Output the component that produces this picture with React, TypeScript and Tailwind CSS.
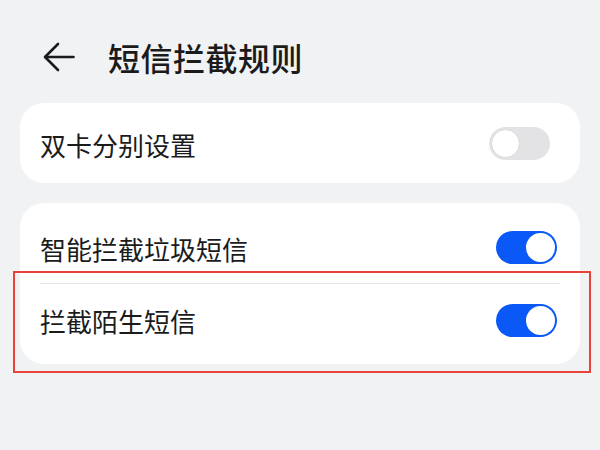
import React from "react";

function Toggle({ on }: { on: boolean }) {
  if (on) {
    return (
      <div className="w-[61px] h-[33px] rounded-full bg-[#0a59f7] flex items-center justify-end pr-[2px]">
        <div className="w-[29px] h-[29px] rounded-full bg-white" />
      </div>
    );
  }
  return (
    <div className="w-[61px] h-[33px] rounded-full bg-[#e3e3e5] flex items-center justify-start pl-[2px]">
      <div className="w-[29px] h-[29px] rounded-full bg-white border border-[#d8d8da]" />
    </div>
  );
}

export default function App() {
  return (
    <div
      className="relative w-[600px] h-[450px] bg-[#f1f2f4] overflow-hidden text-[#1b1b1b]"
      style={{ fontFamily: '"Noto Sans CJK SC", "Noto Sans", sans-serif' }}
    >
      <div className="flex items-center h-[116px] pl-[43px] pb-[1px] -mt-[1px]">
        <svg width="32" height="30" viewBox="0 0 32 30" fill="none" stroke="#1b1b1b" strokeWidth="2.6" strokeLinecap="round" strokeLinejoin="round">
          <path d="M30.5 15H2.5" />
          <path d="M15 2L2 15L15 28" />
        </svg>
        <div className="ml-[33px] text-[32px] leading-none font-medium tracking-[0.5px]">短信拦截规则</div>
      </div>

      <div className="mx-[20px] mt-[-12px] bg-white rounded-[24px] h-[80px] flex items-center justify-between pl-[20px] pr-[30px]">
        <span className="text-[26px] leading-none mt-[3px]">双卡分别设置</span>
        <Toggle on={false} />
      </div>

      <div className="mx-[20px] mt-[20px] bg-white rounded-[24px] py-[8px]">
        <div className="h-[72px] flex items-center justify-between pl-[20px] pr-[23px]">
          <span className="text-[26px] leading-none mt-[4px]">智能拦截垃圾短信</span>
          <Toggle on={true} />
        </div>
        <div className="mx-[20px] h-px bg-[#e4e5e7]" />
        <div className="h-[72px] flex items-center justify-between pl-[20px] pr-[23px]">
          <span className="text-[26px] leading-none mt-[2px]">拦截陌生短信</span>
          <Toggle on={true} />
        </div>
      </div>

      <div className="absolute left-[13px] top-[271px] w-[578px] h-[102px] border-2 border-[#e8433b] pointer-events-none" />
    </div>
  );
}
